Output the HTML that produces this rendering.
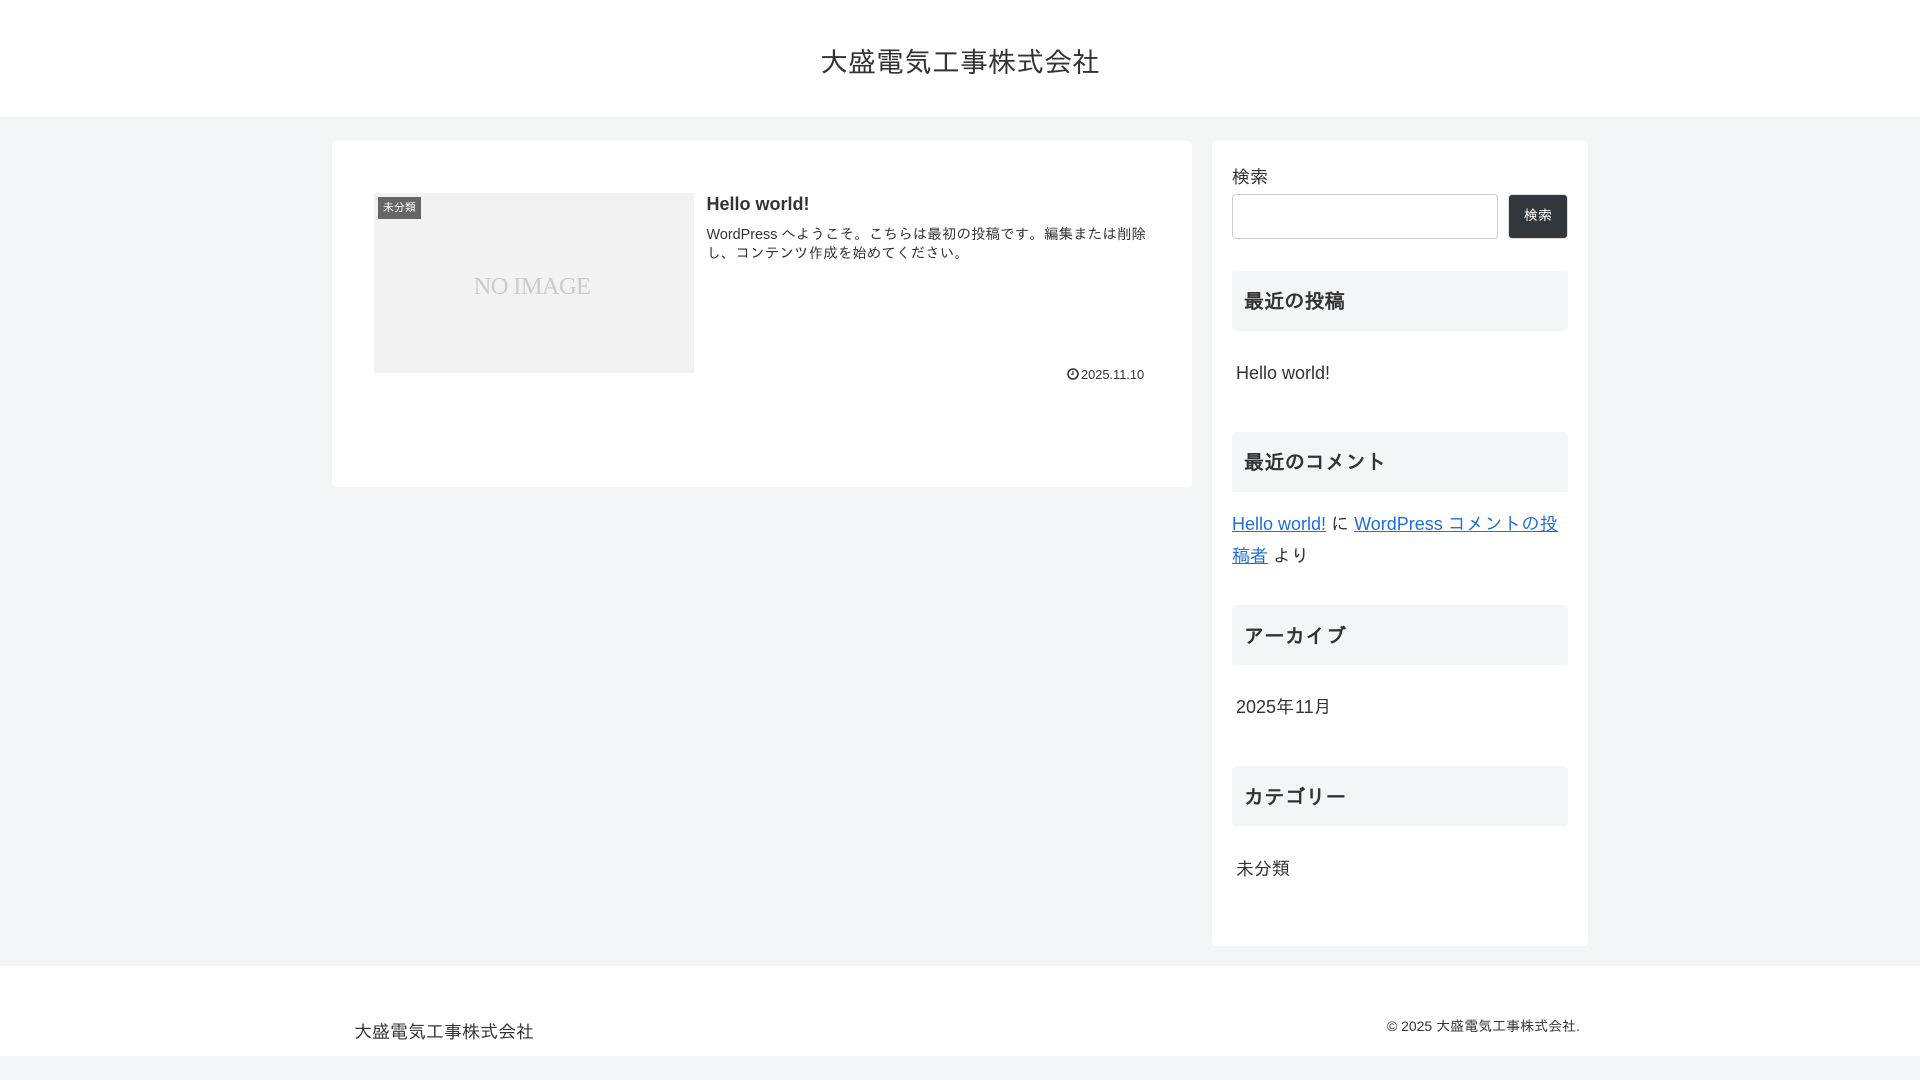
<!DOCTYPE html>
<html lang="ja"><head><meta charset="utf-8"><title>大盛電気工事株式会社</title>
<style>
*{box-sizing:border-box}
html,body{margin:0;padding:0}
body{width:1920px;height:1080px;overflow:hidden;position:relative;background:#f4f5f7;color:#333;font-family:"Liberation Sans","IPAGothic",sans-serif;font-size:18px}
.a{position:absolute;white-space:nowrap}
.t{position:absolute;white-space:nowrap;line-height:32px}
.h{position:absolute;left:1232px;width:336px;height:60px;background:#f4f5f7;border-radius:3px;font-size:20px;font-weight:700;line-height:62px;padding-left:12px;letter-spacing:.35px}
a{color:#1e6fd9}
.s{letter-spacing:.2px}
.l{letter-spacing:.4px}
</style></head><body>
<div class="a" style="left:0;top:0;width:1920px;height:117px;background:#fff"></div>
<div class="a" style="left:0;top:43px;width:1920px;text-align:center;font-size:28px;line-height:40px">大盛電気工事株式会社</div>

<div class="a" style="left:332px;top:141px;width:860px;height:346px;background:#fff;border-radius:4px"></div>
<div class="a" style="left:374px;top:193px;width:320px;height:180px;background:#f2f2f2"></div>
<div class="a" style="left:372px;top:193px;width:320px;height:180px;text-align:center;line-height:187px;font-family:'Liberation Serif',serif;font-size:24.6px;letter-spacing:-.7px;color:#cbcbcb">NO IMAGE</div>
<div class="a" style="left:378px;top:197px;width:43px;height:22px;background:#666;color:#fff;font-size:11px;line-height:22px;text-align:center">未分類</div>
<div class="a" style="left:706.5px;top:192px;font-size:18px;font-weight:700;line-height:24px">Hello world!</div>
<div class="a" style="left:706.5px;top:225.5px;font-size:14.4px;line-height:19px">WordPress <span class="s">へようこそ。こちらは最初の投稿です。編集または削除</span><br><span class="s">し、コンテンツ作成を始めてください。</span></div>
<svg class="a" style="left:1067px;top:368px" width="12" height="12" viewBox="0 0 12 12"><circle cx="6" cy="6" r="5" fill="none" stroke="#333" stroke-width="1.6"/><path d="M6 3v3.3H3.8" fill="none" stroke="#333" stroke-width="1.2"/></svg>
<div class="a" style="left:1081px;top:366px;font-size:12.8px;line-height:18px">2025.11.10</div>

<div class="a" style="left:1212px;top:141px;width:376px;height:805px;background:#fff;border-radius:4px"></div>
<div class="t" style="left:1232px;top:161px">検索</div>
<div class="a" style="left:1232px;top:194px;width:266px;height:45px;border:1px solid #ccc;border-radius:4px;background:#fff"></div>
<div class="a" style="left:1508px;top:194px;width:60px;height:45px;background:#32373c;border:1px solid #ddd;border-radius:4px;color:#fff;font-size:14px;line-height:41px;text-align:center">検索</div>

<div class="h" style="top:271px;letter-spacing:.15px">最近の投稿</div>
<div class="t" style="left:1236px;top:357px">Hello world!</div>
<div class="h" style="top:432px">最近のコメント</div>
<div class="t" style="left:1232px;top:508px"><a href="#">Hello world!</a> に <a href="#">WordPress <span class="l">コメントの投</span></a><br><a href="#">稿者</a> より</div>
<div class="h" style="top:605px;letter-spacing:.5px;line-height:64px">アーカイブ</div>
<div class="t" style="left:1236px;top:691px">2025<span style="letter-spacing:.9px">年</span>11<span style="letter-spacing:.9px">月</span></div>
<div class="h" style="top:766px;letter-spacing:.5px;line-height:64px">カテゴリー</div>
<div class="t" style="left:1236px;top:853px">未分類</div>

<div class="a" style="left:0;top:966px;width:1920px;height:90px;background:#fff"></div>
<div class="a" style="left:354px;top:1018.5px;font-size:18px;line-height:26px">大盛電気工事株式会社</div>
<div class="a" style="right:340px;top:1016px;font-size:14px;line-height:20px">© 2025 大盛電気工事株式会社.</div>
</body></html>
